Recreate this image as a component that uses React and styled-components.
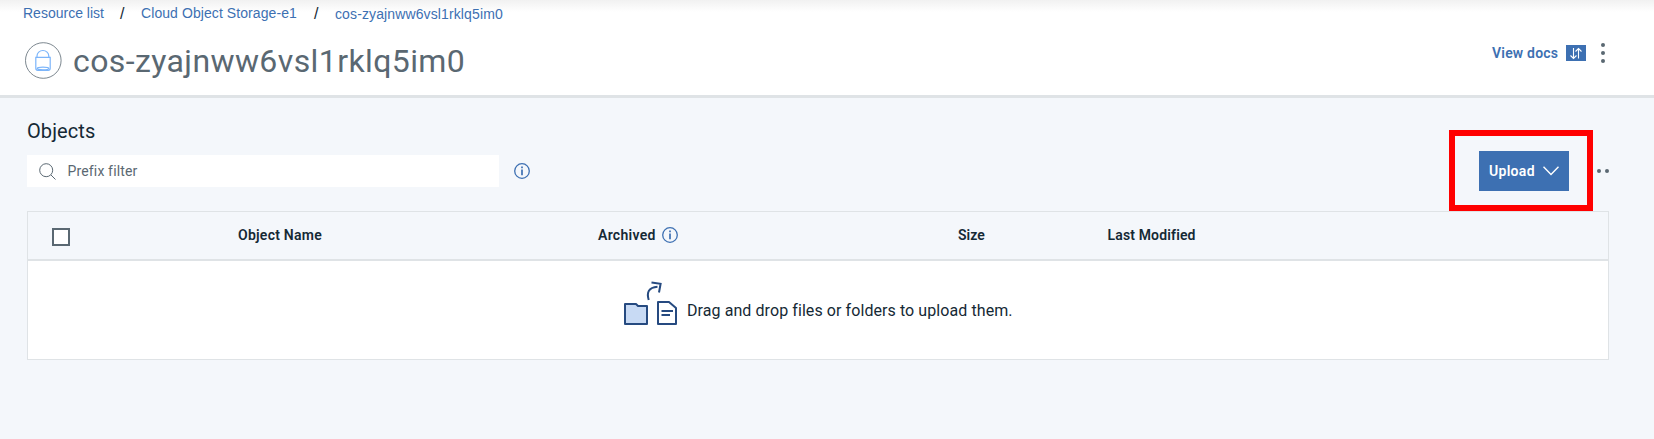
import React from "react";
import styled, { createGlobalStyle } from "styled-components";

const Global = createGlobalStyle`
  * { box-sizing: border-box; }
  body { margin: 0; background: #f4f7fb; font-family: Roboto, "Liberation Sans", sans-serif; color: #152935; }
`;

const Page = styled.div`
  height: 439px;
  overflow: hidden;
  background: #f4f7fb;
`;

const Header = styled.header`
  height: 98px;
  border-bottom: 3px solid #dfe3e6;
  background: linear-gradient(#f1f1f1, #fff 12px);
  display: flex;
  justify-content: space-between;
`;

const Breadcrumb = styled.nav`
  display: flex;
  height: 26px;
  padding-left: 23px;
  align-items: flex-start;
  font-family: "Liberation Sans", Arial, sans-serif;
  font-size: 14px;
  line-height: 26px;
`;

const Crumb = styled.a`
  color: #3d70b2;
  width: ${(p) => p.$w}px;
  margin-top: ${(p) => p.$drop || 0}px;
  letter-spacing: ${(p) => p.$ls || 0}px;
  white-space: nowrap;
`;

const Slash = styled.span`
  width: 37px;
  padding-left: 16px;
  margin-top: 1px;
  color: #152935;
  font-size: 16px;
`;

const TitleRow = styled.div`
  display: flex;
  align-items: center;
  height: 69px;
  padding-left: 25px;
  gap: 11px;
`;

const Title = styled.h1`
  margin: 0;
  font-size: 32px;
  font-weight: 400;
  line-height: 40px;
  letter-spacing: 0.4px;
  color: #5a6872;
  white-space: nowrap;
`;

const HeaderActions = styled.div`
  display: flex;
  align-items: center;
  height: 106px;
  padding-right: 49px;
`;

const DocsLink = styled.a`
  width: 74px;
  font-size: 14px;
  font-weight: 600;
  letter-spacing: 0.2px;
  color: #3d70b2;
  white-space: nowrap;
`;

const DocsBadge = styled.span`
  display: flex;
  width: 20px;
  height: 16px;
  margin-right: 15px;
  background: #3d70b2;
`;

const Main = styled.main`
  padding: 20px 45px 0 27px;
`;

const Heading = styled.h2`
  margin: 0;
  height: 26px;
  font-size: 20px;
  font-weight: 400;
  line-height: 26px;
  letter-spacing: 0.1px;
`;

const Toolbar = styled.div`
  display: flex;
  align-items: center;
  height: 54px;
`;

const Search = styled.div`
  display: flex;
  align-items: center;
  gap: 12px;
  width: 472px;
  height: 32px;
  margin-right: 15px;
  padding-left: 11.500px;
  background: #fff;
  color: #5a6872;
  font-size: 14px;
  letter-spacing: 0.15px;
`;

const ToolbarActions = styled.div`
  display: flex;
  align-items: center;
  gap: 20px;
  margin-left: auto;
`;

const UploadButton = styled.button`
  position: relative;
  display: flex;
  align-items: center;
  justify-content: space-between;
  width: 90px;
  height: 40px;
  padding: 0 10px;
  border: 0;
  background: #3d70b2;
  color: #fff;
  font-family: inherit;
  font-size: 14px;
  font-weight: 600;
  letter-spacing: 0.3px;
`;

const Highlight = styled.span`
  position: absolute;
  z-index: 1;
  top: -21px;
  left: -30px;
  width: 144px;
  height: 81px;
  border: 6px solid #f00;
  pointer-events: none;
`;

const Table = styled.section`
  height: 149px;
  margin-top: 13px;
  border: 1px solid #dfe3e6;
  background: #fff;
`;

const HeadRow = styled.div`
  display: grid;
  grid-template-columns: 210px 360px 360px 149.5px 1fr;
  align-items: center;
  height: 49px;
  border-bottom: 2px solid #dfe3e6;
  background: #f4f7fb;
`;

const HeadCell = styled.div`
  display: flex;
  align-items: center;
  gap: 6px;
  padding-bottom: 2px;
  font-size: 14px;
  font-weight: 600;
  letter-spacing: ${(p) => p.$ls || 0}px;
`;

const Checkbox = styled.span`
  width: 18px;
  height: 18px;
  margin: 3px 0 0 24px;
  border: 2px solid #5a6872;
  background: #fff;
`;

const DropZone = styled.div`
  display: flex;
  align-items: center;
  height: 98px;
  padding-left: 595px;
  gap: 10px;
  font-size: 16px;
  letter-spacing: 0.08px;
`;

const InfoIcon = () => (
  <svg width="16" height="16" viewBox="0 0 16 16" fill="none" stroke="#3d70b2">
    <circle cx="8" cy="8" r="7.3" strokeWidth="1.3" />
    <path d="M8 6.6v5.6M8 3.5v1.8" strokeWidth="1.7" />
  </svg>
);

const Dots = ({ vertical }) => (
  <svg width={vertical ? 4 : 20} height={vertical ? 20 : 4} fill="#5a6872">
    {[2, 10, 18].map((n) => (
      <circle key={n} cx={vertical ? 2 : n} cy={vertical ? n : 2} r="2" />
    ))}
  </svg>
);

const BucketIcon = () => (
  <svg width="37" height="37" viewBox="0 0 37 37" fill="none">
    <circle cx="18.3" cy="18.5" r="17.8" stroke="#5a6872" strokeWidth=".8" />
    <g stroke="#7cb5fa" strokeWidth="1.2">
      <path d="M12 15.300v-1.300a5.900 5.500 0 0 1 11.800 0v1.300" />
      <path d="M10.800 15.300h14.400v11q0 2-2 2H12.800q-2 0-2-2z" />
      <ellipse cx="18" cy="26.500" rx="5.800" ry="1.300" />
    </g>
  </svg>
);

const DropIcon = () => (
  <svg width="54" height="58" viewBox="0 0 54 58" fill="none" stroke="#264a80" strokeWidth="2">
    <path d="M2 23h11l2 2h9v18H2z" fill="#c8daf4" strokeLinejoin="round" />
    <path d="M35 21h11l7 6v16H35z" strokeLinejoin="round" />
    <path d="M38.500 30h11.500M38.500 34h8.500" />
    <path d="M25.700 19C23.500 11.500 25.500 6.500 34.500 5.800" />
    <path d="M28.500 1.600L37.600 2.800 36 11.500" />
  </svg>
);

export default function App() {
  return (
    <Page>
      <Global />
      <Header>
        <div>
          <Breadcrumb>
            <Crumb $w={81}>Resource list</Crumb>
            <Slash>/</Slash>
            <Crumb $w={157} $ls={0.08}>Cloud Object Storage-e1</Crumb>
            <Slash>/</Slash>
            <Crumb $w={170} $drop={1} $ls={0.12}>cos-zyajnww6vsl1rklq5im0</Crumb>
          </Breadcrumb>
          <TitleRow>
            <BucketIcon />
            <Title>cos-zyajnww6vsl1rklq5im0</Title>
          </TitleRow>
        </div>
        <HeaderActions>
          <DocsLink>View docs</DocsLink>
          <DocsBadge>
            <svg width="20" height="16" fill="none" stroke="#fff" strokeWidth="1.1">
              <path d="M7.500 3v10M4.500 10.500l3 3 3-3M12.500 13.500V3.500M9.500 6.500l3-3 3 3" />
            </svg>
          </DocsBadge>
          <Dots vertical />
        </HeaderActions>
      </Header>
      <Main>
        <Heading>Objects</Heading>
        <Toolbar>
          <Search>
            <svg width="17" height="17" fill="none" stroke="#5a6872">
              <circle cx="7.2" cy="7.2" r="6.5" />
              <path d="M12 12l4.5 4.5" />
            </svg>
            Prefix filter
          </Search>
          <InfoIcon />
          <ToolbarActions>
            <UploadButton>
              Upload
              <svg width="16" height="10" fill="none" stroke="#fff" strokeWidth="1.4">
                <path d="M.5.7L8 8.500 15.500.7" />
              </svg>
              <Highlight />
            </UploadButton>
            <Dots />
          </ToolbarActions>
        </Toolbar>
        <Table>
          <HeadRow>
            <Checkbox />
            <HeadCell $ls={0.25}>Object Name</HeadCell>
            <HeadCell $ls={0.3}>Archived <InfoIcon /></HeadCell>
            <HeadCell>Size</HeadCell>
            <HeadCell $ls={0.15}>Last Modified</HeadCell>
          </HeadRow>
          <DropZone>
            <DropIcon />
            Drag and drop files or folders to upload them.
          </DropZone>
        </Table>
      </Main>
    </Page>
  );
}
